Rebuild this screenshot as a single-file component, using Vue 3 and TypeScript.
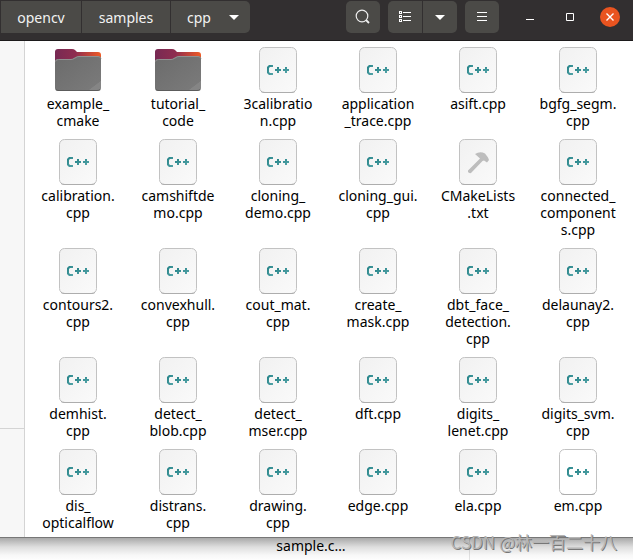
<script setup lang="ts">
type Kind = 'folder' | 'cpp' | 'cmake'

interface Entry {
  lines: string[]
  kind: Kind
  plain?: boolean
}

const cpp = (...lines: string[]): Entry => ({ lines, kind: 'cpp' })

const entries: Entry[] = [
  { lines: ['example_', 'cmake'], kind: 'folder' },
  { lines: ['tutorial_', 'code'], kind: 'folder' },
  cpp('3calibratio', 'n.cpp'),
  cpp('application', '_trace.cpp'),
  cpp('asift.cpp'),
  cpp('bgfg_segm.', 'cpp'),
  cpp('calibration.', 'cpp'),
  cpp('camshiftde', 'mo.cpp'),
  cpp('cloning_', 'demo.cpp'),
  cpp('cloning_gui.', 'cpp'),
  { lines: ['CMakeLists', '.txt'], kind: 'cmake' },
  cpp('connected_', 'component', 's.cpp'),
  cpp('contours2.', 'cpp'),
  cpp('convexhull.', 'cpp'),
  cpp('cout_mat.', 'cpp'),
  cpp('create_', 'mask.cpp'),
  cpp('dbt_face_', 'detection.', 'cpp'),
  cpp('delaunay2.', 'cpp'),
  cpp('demhist.', 'cpp'),
  cpp('detect_', 'blob.cpp'),
  cpp('detect_', 'mser.cpp'),
  cpp('dft.cpp'),
  cpp('digits_', 'lenet.cpp'),
  cpp('digits_svm.', 'cpp'),
  cpp('dis_', 'opticalflow'),
  cpp('distrans.', 'cpp'),
  cpp('drawing.', 'cpp'),
  cpp('edge.cpp'),
  cpp('ela.cpp'),
  { lines: ['em.cpp'], kind: 'cpp', plain: true },
]
</script>

<template>
  <div class="desktop">
    <div class="window">
      <header class="bar">
        <nav class="path" aria-label="Path">
          <button type="button" class="crumb">opencv</button>
          <button type="button" class="crumb">samples</button>
          <button type="button" class="crumb last">
            cpp
            <svg width="10" height="5" viewBox="0 0 10 5"><path d="M0 0h10L5 5z" fill="#fff" /></svg>
          </button>
        </nav>
        <div class="tools">
          <button type="button" class="tool" aria-label="Search">
            <svg width="16" height="16" viewBox="0 0 16 16" fill="none" stroke="#eee">
              <circle cx="7" cy="7" r="5.8" stroke-width="1.2" />
              <path d="M11 11l3 3" stroke-width="1.8" />
            </svg>
          </button>
          <div class="linked">
            <button type="button" class="tool" aria-label="List view">
              <svg width="16" height="16" viewBox="0 0 16 16" fill="none" stroke="#fff" shape-rendering="crispEdges">
                <path d="M2.5 2.5h2v2h-2zM2.5 6.5h2v2h-2zM2.5 10.500h2v2h-2zM6 3.500h8M6 7.500h8M6 11.500h8" />
              </svg>
            </button>
            <button type="button" class="tool" aria-label="View options">
              <svg width="10" height="5" viewBox="0 0 10 5"><path d="M0 0h10L5 5z" fill="#fff" /></svg>
            </button>
          </div>
          <button type="button" class="tool" aria-label="Menu">
            <svg width="16" height="16" viewBox="0 0 16 16" stroke="#fff" shape-rendering="crispEdges">
              <path d="M3 3.500h10M3 7.500h10M3 11.500h10" />
            </svg>
          </button>
        </div>
        <div class="controls">
          <button type="button" class="control" aria-label="Minimize">
            <svg width="8" height="10" viewBox="0 0 8 10"><path d="M0 7.5h8" stroke="#fff" /></svg>
          </button>
          <button type="button" class="control" aria-label="Maximize">
            <svg width="8" height="8" viewBox="0 0 8 8"><path d="M.5.5h7v7h-7z" fill="none" stroke="#fff" /></svg>
          </button>
          <button type="button" class="control close" aria-label="Close">
            <svg width="8" height="8" viewBox="0 0 8 8"><path d="M.5.5l7 7M7.5.5l-7 7" stroke="#fff" stroke-width="1.4" /></svg>
          </button>
        </div>
      </header>

      <div class="body">
        <aside class="sidebar">
          <div class="places"></div>
          <div class="other"></div>
        </aside>
        <main class="files">
          <figure v-for="entry in entries" :key="entry.lines.join('')" class="file">
            <svg v-if="entry.kind === 'folder'" class="icon" viewBox="0 0 48 48">
              <defs>
                <linearGradient id="back" x1="0" x2="1">
                  <stop offset="0" stop-color="#772953" />
                  <stop offset=".45" stop-color="#8f2d4f" />
                  <stop offset="1" stop-color="#f05a24" />
                </linearGradient>
                <linearGradient id="front" x1="0" y1="0" x2="1" y2="1">
                  <stop offset="0" stop-color="#6b6b6b" />
                  <stop offset=".85" stop-color="#797979" />
                  <stop offset=".86" stop-color="#858585" />
                </linearGradient>
              </defs>
              <path d="M1 20V6q0-3 3-3h14q2 0 3 1l2 2h21q3 0 3 3v14H1z" fill="url(#back)" />
              <path d="M1 16q0-3 3-3h13q2 0 3-1l2-1q1-1 3-1h19q3 0 3 3v29q0 3-3 3H4q-3 0-3-3z" fill="url(#front)" />
              <path d="M1.5 15.5q0-2 3-2H17q2 0 3-1l2-1q1-1 3-1h19q2 0 3 2" fill="none" stroke="#919191" />
              <path d="M2 43.5q1 1 3 1h38q2 0 3-1" fill="none" stroke="#5c5c5c" />
            </svg>
            <svg v-else class="icon" viewBox="0 0 48 48">
              <defs>
                <linearGradient id="sheet" x1="0" y1="0" x2="1" y2="1">
                  <stop offset="0" stop-color="#f1f1f1" />
                  <stop offset="1" stop-color="#fafafa" />
                </linearGradient>
                <linearGradient id="teal" x1="0" x2="1" y2="1">
                  <stop offset="0" stop-color="#238186" />
                  <stop offset="1" stop-color="#56a5a9" />
                </linearGradient>
              </defs>
              <rect x="5.5" y="1.5" width="37" height="45" rx="5" :fill="entry.plain ? '#fff' : 'url(#sheet)'" stroke="#c2c2c2" />
              <path d="M7 45.5q1 1 4 1h26q3 0 4-1" fill="none" stroke="#adadad" />
              <path v-if="entry.kind === 'cmake'" d="M14 32.500L26 20.500L21 16Q26 13 31 15.500L34 19.500L35 22L33 24.500L30 22.500L28.500 23L17 35Q15 35.500 14 34Z" fill="#bdbdbd" />
              <g v-else fill="url(#teal)">
                <path d="M19 19v2h-3l-1 1v4l1 1h3v2h-4l-2-2v-6l2-2z" />
                <path d="M23 21h2v2h2v2h-2v2h-2v-2h-2v-2h2zM31 21h2v2h2v2h-2v2h-2v-2h-2v-2h2z" />
              </g>
            </svg>
            <figcaption>{{ entry.lines.join('\n') }}</figcaption>
          </figure>
        </main>
      </div>
    </div>

    <div class="behind">
      <div class="pane"><span class="under">sample.c…</span></div>
      <div class="rest"></div>
    </div>
    <div class="watermark">CSDN @林一百二十八</div>
  </div>
</template>

<style>
body {
  margin: 0;
  background: #fff;
}
</style>

<style scoped>
.desktop {
  position: relative;
  display: flex;
  flex-direction: column;
  min-height: 100vh;
  overflow: hidden;
  font: 14px/17px "Noto Sans", "Noto Sans CJK SC", sans-serif;
  color: #000;
}

.window {
  border-bottom: 1px solid #777;
}

button {
  margin: 0;
  padding: 0;
  border: 0;
  background: none;
  color: #f2f2f2;
  font: inherit;
  display: flex;
  align-items: center;
  justify-content: center;
}

.bar {
  display: flex;
  align-items: flex-start;
  height: 41px;
  box-sizing: border-box;
  padding: 1px 8px 0 1px;
  background: #322f30;
  border-bottom: 1px solid #1c1a1b;
}

.path,
.linked {
  display: flex;
  gap: 1px;
}

.path {
  flex: 1;
}

.crumb {
  height: 32px;
  width: 80px;
  background: #4b4a47;
}

.crumb + .crumb {
  width: 88px;
}

.crumb.last {
  width: 79px;
  box-sizing: border-box;
  padding-left: 5px;
  gap: 18px;
  border-radius: 0 5px 5px 0;
}

.tools {
  display: flex;
  gap: 8px;
}

.tool {
  width: 34px;
  height: 32px;
  background: #4b4a47;
  border-radius: 5px;
}

.linked .tool:first-child {
  border-radius: 5px 0 0 5px;
}

.linked .tool:last-child {
  border-radius: 0 5px 5px 0;
}

.controls {
  display: flex;
  align-items: center;
  gap: 10px;
  height: 32px;
  margin-left: 16px;
}

.control {
  width: 30px;
  height: 20px;
}

.control.close {
  width: 20px;
  height: 20px;
  margin: 0 5px;
  border-radius: 50%;
  background: #e95420;
}

.body {
  display: flex;
}

.sidebar {
  display: flex;
  flex-direction: column;
  width: 24px;
  background: #f7f7f7;
  border-right: 1px solid #d4d4d4;
}

.places {
  flex: 1;
}

.other {
  height: 108px;
  border-top: 1px solid #d4d4d4;
}

.files {
  flex: 1;
  display: grid;
  grid-template-columns: repeat(6, 1fr);
  row-gap: 9px;
  padding: 5px 5px 6px 3px;
  background: #fff;
}

.file {
  display: flex;
  flex-direction: column;
  align-items: center;
  gap: 1px;
  margin: 0;
}

.icon {
  width: 48px;
  height: 48px;
}

figcaption {
  text-align: center;
  white-space: pre;
}

.behind {
  flex: 1;
  display: flex;
  background: linear-gradient(#a9a9a9, #dedede 9px, #f7f7f7 17px, #fff 23px);
}

.pane {
  width: 469px;
  border-right: 1px solid rgba(0, 0, 0, 0.1);
}

.under {
  display: block;
  margin-left: 153px;
  line-height: 16px;
  text-align: center;
}

.watermark {
  position: absolute;
  right: 16px;
  bottom: 6px;
  font-family: "Noto Sans CJK SC", sans-serif;
  font-size: 17px;
  line-height: 24px;
  color: #b5b5b5;
  text-shadow: 1px 1px 0 #777;
}
</style>
